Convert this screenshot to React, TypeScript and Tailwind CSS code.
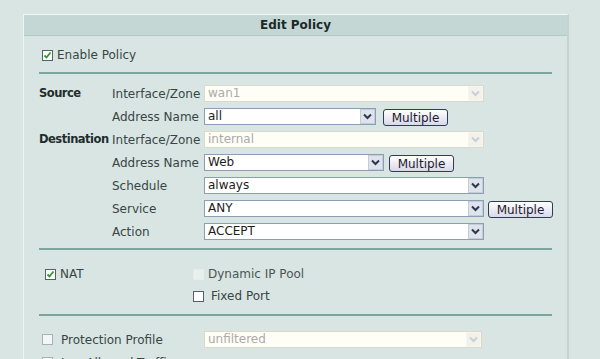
import React from "react";

function Chevron({ disabled }: { disabled?: boolean }) {
  return (
    <svg width="9" height="7" viewBox="0 0 9 7">
      <path
        d="M1 1.5 L4.5 5 L8 1.5"
        fill="none"
        stroke={disabled ? "#c9cfd6" : "#2b3850"}
        strokeWidth="2"
      />
    </svg>
  );
}

function Select({
  value,
  width,
  disabled,
}: {
  value: string;
  width: string;
  disabled?: boolean;
}) {
  return (
    <div
      className={`flex h-[17px] items-stretch border ${width} ${
        disabled
          ? "border-[#dcd9cc] bg-[#fffef6] text-[#ababab]"
          : "border-[#8a9fb4] bg-white text-[#1c1c1c]"
      }`}
    >
      <div className="flex-1 truncate pl-[3px] text-[12px] leading-[15px]">
        {value}
      </div>
      <div
        className={`flex w-[15px] items-center justify-center border ${
          disabled
            ? "border-[#f6f5ee] bg-[#f3f2ea]"
            : "border-[#c4ccd8] bg-[#dfe4ec]"
        }`}
      >
        <Chevron disabled={disabled} />
      </div>
    </div>
  );
}

function MultipleBtn() {
  return (
    <button className="h-[17px] w-[65px] rounded-[3px] border border-[#2e3c58] bg-gradient-to-b from-white to-[#d9d8ea] text-[12px] leading-[14px] text-[#1c1c2c]">
      Multiple
    </button>
  );
}

function Check({
  checked,
  disabled,
  faint,
}: {
  checked?: boolean;
  disabled?: boolean;
  faint?: boolean;
}) {
  return (
    <div
      className={`flex h-[11px] w-[11px] items-center justify-center border ${
        faint
          ? "border-[#e6ecea] bg-[#e9efed]"
          : disabled
            ? "border-[#a9b2b2] bg-[#f3f6f6]"
            : "border-[#55606a] bg-white"
      }`}
    >
      {checked && (
        <svg width="9" height="9" viewBox="0 0 9 9">
          <path
            d="M1.5 4.5 L3.5 6.5 L7.5 1.5"
            fill="none"
            stroke="#2f9a2a"
            strokeWidth="1.8"
          />
        </svg>
      )}
    </div>
  );
}

function Divider() {
  return <div className="mx-[15px] h-[2px] border-t-2 border-[#7aa59e]" />;
}

function Row({
  section,
  label,
  children,
}: {
  section?: string;
  label: string;
  children: React.ReactNode;
}) {
  return (
    <div className="flex h-[23px] items-center">
      <div className="w-[73px] whitespace-nowrap text-[11.5px] font-bold tracking-[-0.5px] text-[#1f2d2d]">
        {section}
      </div>
      <div className="w-[92px] whitespace-nowrap text-[12px] text-[#384545]">
        {label}
      </div>
      {children}
    </div>
  );
}

export default function App() {
  return (
    <div className="h-[359px] w-[600px] overflow-hidden bg-[#d9e5e3] pl-[23px] pt-[14px] font-['DejaVu_Sans',sans-serif]">
      <div className="h-[400px] w-[546px] border-l border-t border-r-2 border-l-[#eef4f3] border-t-[#f4f8f7] border-r-[#c3d3d1] bg-[#d9e5e3]">
        <div className="h-[21px] border-b border-[#b3c9c6] bg-[#c4d7d4] text-center text-[12px] font-bold leading-[21px] text-[#1b2929]">
          Edit Policy
        </div>

        <div className="ml-[18px] mt-[10px] flex h-[18px] items-center gap-[4px] text-[12px] text-[#384545]">
          <Check checked />
          <span>Enable Policy</span>
        </div>

        <div className="mt-[8px]">
          <Divider />
        </div>

        <div className="ml-[15px] mt-[8px]">
          <Row section="Source" label="Interface/Zone">
            <Select value="wan1" width="w-[280px]" disabled />
          </Row>
          <Row label="Address Name">
            <Select value="all" width="w-[172px]" />
            <div className="ml-[7px]">
              <MultipleBtn />
            </div>
          </Row>
          <Row section="Destination" label="Interface/Zone">
            <Select value="internal" width="w-[280px]" disabled />
          </Row>
          <Row label="Address Name">
            <Select value="Web" width="w-[180px]" />
            <div className="ml-[5px]">
              <MultipleBtn />
            </div>
          </Row>
          <Row label="Schedule">
            <Select value="always" width="w-[280px]" />
          </Row>
          <Row label="Service">
            <Select value="ANY" width="w-[280px]" />
            <div className="ml-[4px]">
              <MultipleBtn />
            </div>
          </Row>
          <Row label="Action">
            <Select value="ACCEPT" width="w-[280px]" />
          </Row>
        </div>

        <div className="mt-[5px]">
          <Divider />
        </div>

        <div className="mt-[15px] flex h-[18px] items-center text-[12px] text-[#384545]">
          <div className="ml-[21px] flex w-[148px] items-center gap-[4px]">
            <Check checked />
            <span>NAT</span>
          </div>
          <div className="flex items-center gap-[4px] text-[#4a5656]">
            <Check faint />
            <span>Dynamic IP Pool</span>
          </div>
        </div>
        <div className="mt-[4px] flex h-[18px] items-center text-[12px] text-[#384545]">
          <div className="ml-[169px] flex items-center gap-[7px]">
            <Check />
            <span>Fixed Port</span>
          </div>
        </div>

        <div className="mt-[9px]">
          <Divider />
        </div>

        <div className="ml-[18px] mt-[12px] text-[12px] text-[#384545]">
          <div className="flex h-[23px] items-center">
            <div className="flex w-[162px] items-center gap-[8px]">
              <Check disabled />
              <span>Protection Profile</span>
            </div>
            <Select value="unfiltered" width="w-[278px]" disabled />
          </div>
          <div className="flex h-[23px] items-center">
            <div className="flex items-center gap-[8px]">
              <Check disabled />
              <span>Log Allowed Traffic</span>
            </div>
          </div>
        </div>
      </div>
    </div>
  );
}
